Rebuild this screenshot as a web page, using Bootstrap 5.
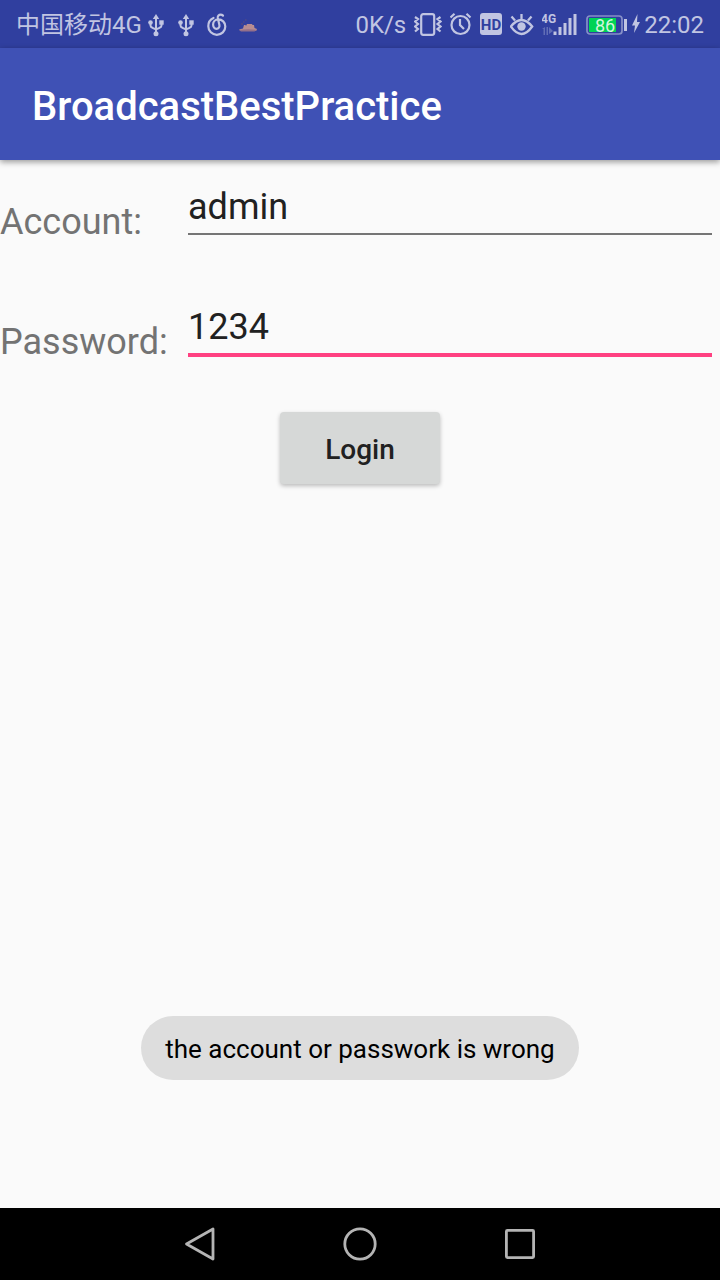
<!DOCTYPE html>
<html lang="en">
<head>
<meta charset="utf-8">
<meta name="viewport" content="width=device-width, initial-scale=1">
<title>BroadcastBestPractice</title>
<link href="https://cdn.jsdelivr.net/npm/bootstrap@5.3.0/dist/css/bootstrap.min.css" rel="stylesheet">
<style>
  body { font-family: Roboto, "Noto Sans CJK SC", sans-serif; background: #fafafa; }
  .status-bar { height: 48px; padding: 2px 16px 0; background: #303f9f; color: #c1c5e2; font-size: 24px; line-height: 28px; }
  .status-bar svg { height: 26px; flex: none; display: block; }
  .status-notes { gap: 12px; margin-left: 5px; }
  .app-bar { height: 112px; padding: 6px 32px 0; background: #3f51b5; box-shadow: 0 2px 6px rgba(0,0,0,.4); }
  .app-title { font-size: 40px; line-height: 48px; font-weight: 500; }
  .field-row { height: 120px; padding-right: 8px; }
  .field-label { width: 188px; padding-top: 4px; font-size: 36px; line-height: 44px; color: #737373; }
  .field-input { margin-top: 24px; padding: 1px 0 4px; min-width: 0; box-sizing: content-box; height: 44px; line-height: 44px; font-size: 36px; color: #212121; background: transparent; border: 0; border-bottom: 2px solid #757575; border-radius: 0; outline: 0; }
  .field-input.is-current { border-bottom: 4px solid #ff4081; }
  .login-btn { width: 160px; height: 72px; margin-top: 12px; padding: 4px 0 0; font-size: 28px; font-weight: 500; color: #212121; background: #d6d8d7; border: 0; border-radius: 4px; box-shadow: 0 2px 4px rgba(0,0,0,.25); }
  .notice-wrap { bottom: 128px; }
  .notice { height: 64px; padding: 2px 24px 0; font-size: 26px; color: #000; background: #dddddd; }
  .nav-keys { height: 72px; gap: 96px; background: #000; }
  .nav-keys button { width: 64px; height: 64px; }
</style>
</head>
<body>
<div class="d-flex flex-column min-vh-100">
  <header>
    <div class="status-bar d-flex align-items-center justify-content-between">
      <div class="d-flex align-items-center">
        <span class="text-nowrap">中国移动4G</span>
        <div class="status-notes d-flex">
          <svg width="18" viewBox="0 0 18 26" fill="currentColor" aria-hidden="true"><path d="M9 2l3.200 5H5.800z"/><circle cx="9" cy="21.800" r="2.500"/><circle cx="3.500" cy="10.500" r="2.300"/><path d="M12.300 8.300h4.400v4.400h-4.400z"/><path d="M9 4v18M3.500 10v3.500q0 1.500 2 2.300L9 17.300l3.500-1.500q2-.8 2-2.300V10" fill="none" stroke="currentColor" stroke-width="2"/></svg>
          <svg width="18" viewBox="0 0 18 26" fill="currentColor" aria-hidden="true"><path d="M9 2l3.200 5H5.800z"/><circle cx="9" cy="21.800" r="2.500"/><circle cx="3.500" cy="10.500" r="2.300"/><path d="M12.300 8.300h4.400v4.400h-4.400z"/><path d="M9 4v18M3.500 10v3.500q0 1.500 2 2.300L9 17.300l3.500-1.500q2-.8 2-2.300V10" fill="none" stroke="currentColor" stroke-width="2"/></svg>
          <svg width="20" viewBox="0 0 20 26" fill="none" stroke="currentColor" stroke-width="2.200" stroke-linecap="round" aria-hidden="true"><path d="M6.500 6C3 7.500 1.300 10.700 1.300 14.200c0 4.900 3.900 8.600 8.500 8.600 4.800 0 8.500-3.700 8.500-8.400 0-4-3.200-7-7-7-3.200 0-5.200 2.600-5.200 5.200 0 2.300 1.400 4.200 3.400 4.200s3.300-1.700 2.900-3.800L10.800 6C10.500 3.900 12 2.600 13.600 2.600c1 0 1.700.3 2.400 1"/></svg>
          <svg width="18" viewBox="0 0 18 26" aria-hidden="true"><path d="M0 17.500l4-1 1-3.500h1.500l.5 1 1-2h5l.500 1h1.500l.5 3 2.500 1L17 19H2z" fill="#b88d91"/><path d="M0 18q9-1.500 18 0L15.500 19.500H2z" fill="#94708a"/><path d="M2 12h2M4 10h1.500M6 8h1.500" stroke="#5d4d7c" stroke-width="1.200"/></svg>
        </div>
      </div>
      <div class="d-flex align-items-center gap-2">
        <span class="text-nowrap">0K/s</span>
        <svg width="28" viewBox="0 0 28 26" fill="none" stroke="currentColor" stroke-width="2.200" aria-hidden="true"><rect x="7.200" y="2.200" width="13" height="20.600" rx="2"/><path d="M1 5l3 2-3 2.500 3 2.500-3 2.500 3 2.500-3 2.500M26.500 5l-3 2 3 2.500-3 2.500 3 2.500-3 2.500 3 2.500"/></svg>
        <svg width="22" viewBox="0 0 22 26" fill="none" stroke="currentColor" stroke-width="2.200" aria-hidden="true"><circle cx="10.500" cy="13" r="9"/><path d="M10 7v6l4 4M.5 5.500L4.500 1.800M20.500 5.500L16.500 1.800"/></svg>
        <svg width="22" viewBox="0 0 22 26" aria-hidden="true"><rect y="1" width="22" height="22" rx="3" fill="currentColor"/><text x="11" y="17.500" text-anchor="middle" font-size="15" font-weight="700" fill="#303f9f">HD</text></svg>
        <svg width="24" viewBox="0 0 24 26" fill="none" stroke="currentColor" stroke-width="2.300" aria-hidden="true"><path d="M.8 14.500q10.700-13 21.400 0-10.700 15-21.400 0zM11.500 8V2M5 8.500l-3.500-4M18 8.500l3.500-4"/><circle cx="11.500" cy="14.500" r="4.200" fill="currentColor" stroke="none"/></svg>
        <svg width="36" viewBox="0 0 36 26" fill="currentColor" aria-hidden="true"><text x="-1" y="10.500" font-size="12" font-weight="700">4G</text><path d="M0 17l3-2v8H1.500v-6zM4.500 15H6v8H4.500zM7 15l4 4-4 3z" opacity=".35"/><path d="M11.500 19.500h3V23h-3zM16.500 15h3v8h-3zM21.500 11h3v12h-3zM26.500 6h3v17h-3zM31.500 2h3v21h-3z"/></svg>
        <div class="d-flex align-items-center gap-1">
          <svg width="42" viewBox="0 0 42 26" aria-hidden="true"><rect x="1" y="4" width="35" height="18" rx="3" fill="none" stroke="#8790c8" stroke-width="1.700"/><path d="M3 6h27v14H3z" fill="#00d355"/><path d="M38 7h3v12h-3z" fill="currentColor"/><text x="19" y="19.500" text-anchor="middle" font-size="18" fill="#d4f5df">86</text></svg>
          <svg width="8" viewBox="0 0 8 26" aria-hidden="true"><path d="M5.500 2L0 13.500h3L2 21l6-11H5z" fill="currentColor"/></svg>
          <span>22:02</span>
        </div>
      </div>
    </div>
    <div class="app-bar d-flex align-items-center position-relative">
      <h1 class="app-title text-white mb-0">BroadcastBestPractice</h1>
    </div>
  </header>

  <main class="flex-grow-1 position-relative">
    <form onsubmit="return false">
      <div class="field-row d-flex">
        <label class="field-label align-self-center flex-shrink-0" for="account">Account:</label>
        <input class="field-input flex-grow-1 align-self-start" id="account" type="text" value="admin">
      </div>
      <div class="field-row d-flex">
        <label class="field-label align-self-center flex-shrink-0" for="password">Password:</label>
        <input class="field-input is-current flex-grow-1 align-self-start" id="password" type="text" value="1234">
      </div>
      <button class="login-btn d-block mx-auto" type="submit">Login</button>
    </form>
    <div class="notice-wrap position-absolute start-0 end-0 d-flex justify-content-center">
      <div class="notice rounded-pill d-flex align-items-center" role="status">the account or passwork is wrong</div>
    </div>
  </main>

  <nav class="nav-keys d-flex justify-content-center align-items-center" aria-label="System">
    <button class="bg-transparent border-0 p-0" type="button" aria-label="Back"><svg class="d-block m-auto" width="36" height="36" viewBox="0 0 36 36" fill="none" stroke="#b4b4b4" stroke-width="2.800" stroke-linejoin="round"><path d="M31 3v30L4.500 18z"/></svg></button>
    <button class="bg-transparent border-0 p-0" type="button" aria-label="Home"><svg class="d-block m-auto" width="36" height="36" viewBox="0 0 36 36" fill="none" stroke="#b4b4b4" stroke-width="2.800"><circle cx="18" cy="18" r="15.200"/></svg></button>
    <button class="bg-transparent border-0 p-0" type="button" aria-label="Recent apps"><svg class="d-block m-auto" width="36" height="36" viewBox="0 0 36 36" fill="none" stroke="#b4b4b4" stroke-width="2.800"><rect x="4.400" y="4.400" width="27.200" height="27.200" rx="1"/></svg></button>
  </nav>
</div>
<script src="https://cdn.jsdelivr.net/npm/bootstrap@5.3.0/dist/js/bootstrap.bundle.min.js"></script>
</body>
</html>
